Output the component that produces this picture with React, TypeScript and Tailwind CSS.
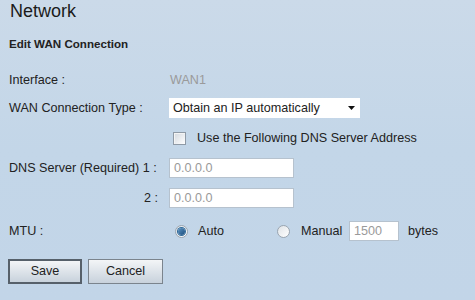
import React from 'react'

function Checkbox() {
  return (
    <span className="inline-block h-[13px] w-[13px] border border-[#8f9aa6] bg-gradient-to-br from-[#d3d8de] to-[#ffffff] shadow-[inset_1px_1px_0_#f4f4f4]" />
  )
}

function Radio({ checked }: { checked?: boolean }) {
  return (
    <span className="inline-flex h-[13px] w-[13px] items-center justify-center rounded-full border border-[#9aa5b0] bg-gradient-to-br from-[#dfe3e7] to-[#ffffff]">
      {checked && (
        <span className="h-[7px] w-[7px] rounded-full bg-gradient-to-br from-[#5d95c4] to-[#1b4f7f] shadow-[0_0_0_1px_#2f6a9a]" />
      )}
    </span>
  )
}

function TextBox({ value, width }: { value: string; width: string }) {
  return (
    <div
      className={`flex h-[20px] items-center border border-[#b6c2ce] bg-white pl-[4px] text-[#9a9a9a] ${width}`}
    >
      {value}
    </div>
  )
}

export default function App() {
  return (
    <div
      className="h-[300px] w-[475px] overflow-hidden bg-gradient-to-b from-[#cbdae9] via-[#c3d6e8] to-[#c2d5e8] text-[12.6px] text-[#222]"
      style={{ fontFamily: '"Liberation Sans", Arial, sans-serif' }}
    >
      <div className="h-[23px] pl-[10px] text-[18px] leading-[23px] text-[#1b1b1b]">Network</div>
      <div className="flex h-[42px] items-center pl-[9px] text-[11.6px] font-bold">Edit WAN Connection</div>

      <div className="flex h-[31px] items-center">
        <div className="w-[170px] pl-[9px]">Interface :</div>
        <div className="text-[#9a9a9a]">WAN1</div>
      </div>

      <div className="flex h-[24px] items-center">
        <div className="w-[169px] pl-[9px]">WAN Connection Type :</div>
        <div className="flex h-[20px] w-[191px] items-center justify-between bg-white pl-[4px] pr-[5px]">
          <span>Obtain an IP automatically</span>
          <svg width="7" height="4" viewBox="0 0 7 4">
            <path d="M0 0 H7 L3.5 4 Z" fill="#111" />
          </svg>
        </div>
      </div>

      <div className="flex h-[36px] items-center">
        <div className="w-[173px]" />
        <Checkbox />
        <span className="ml-[11px]">Use the Following DNS Server Address</span>
      </div>

      <div className="flex h-[24px] items-center">
        <div className="w-[169px] pl-[9px]">DNS Server (Required) 1 :</div>
        <TextBox value="0.0.0.0" width="w-[125px]" />
      </div>

      <div className="flex h-[36px] items-center">
        <div className="w-[158px] text-right">2 :</div>
        <div className="w-[11px]" />
        <TextBox value="0.0.0.0" width="w-[125px]" />
      </div>

      <div className="flex h-[30px] items-center">
        <div className="w-[175px] pl-[9px]">MTU :</div>
        <Radio checked />
        <span className="ml-[10px] w-[79px]">Auto</span>
        <Radio />
        <span className="ml-[11px] w-[48px]">Manual</span>
        <TextBox value="1500" width="w-[50px]" />
        <span className="ml-[9px]">bytes</span>
      </div>

      <div className="mt-[13px] flex gap-[6px] pl-[8px]">
        <button className="h-[25px] w-[74px] border-2 border-[#56606a] bg-gradient-to-b from-[#f3f5f7] to-[#c8d2dc] text-[12.6px] text-[#222]">
          Save
        </button>
        <button className="h-[25px] w-[75px] border border-[#7b848d] bg-gradient-to-b from-[#f3f5f7] to-[#c8d2dc] text-[12.6px] text-[#222]">
          Cancel
        </button>
      </div>
    </div>
  )
}
